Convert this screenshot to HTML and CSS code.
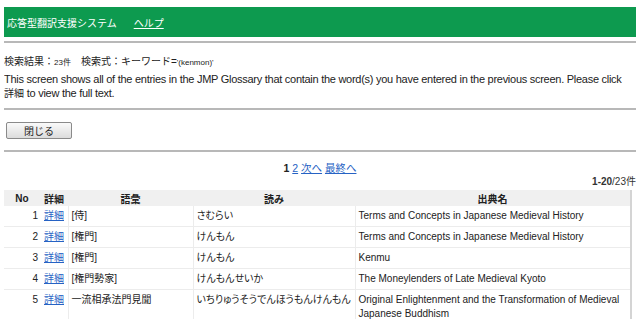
FILE: index.html
```html
<!DOCTYPE html>
<html lang="ja">
<head>
    <meta charset="UTF-8">
    <title>検索結果</title>
    <link rel="stylesheet" href="styles.css">
</head>
<body>
    <!-- Header -->
    <div class="header">
        <span class="title">応答型翻訳支援システム</span>
        <a href="#" class="help">ヘルプ</a>
    </div>
    <hr class="rule">

    <!-- Search info -->
    <p class="search-info">検索結果：<span class="small">23件</span>　検索式：キーワード=<span class="small">'(kenmon)'</span></p>
    <p class="desc">This screen shows all of the entries in the JMP Glossary that contain the word(s) you have entered in the previous screen. Please click <span class="ja">詳細</span> to view the full text.</p>
    <hr class="rule">

    <div class="actions">
        <button class="close-btn">閉じる</button>
    </div>
    <hr class="rule">

    <!-- Pager -->
    <div class="pager">
        <b>1</b> <a href="#">2</a> <a href="#">次へ</a> <a href="#">最終へ</a>
    </div>
    <div class="count"><b>1-20</b>/23件</div>

    <!-- Results -->
    <table class="results">
        <colgroup>
            <col class="c-no">
            <col class="c-detail">
            <col class="c-term">
            <col class="c-read">
            <col>
        </colgroup>
        <thead>
            <tr>
                <th>No</th>
                <th>詳細</th>
                <th>語彙</th>
                <th>読み</th>
                <th>出典名</th>
            </tr>
        </thead>
        <tbody>
            <tr>
                <td class="num">1</td>
                <td><a href="#">詳細</a></td>
                <td>[侍]</td>
                <td class="kana">さむらい</td>
                <td>Terms and Concepts in Japanese Medieval History</td>
            </tr>
            <tr>
                <td class="num">2</td>
                <td><a href="#">詳細</a></td>
                <td>[権門]</td>
                <td class="kana">けんもん</td>
                <td>Terms and Concepts in Japanese Medieval History</td>
            </tr>
            <tr>
                <td class="num">3</td>
                <td><a href="#">詳細</a></td>
                <td>[権門]</td>
                <td class="kana">けんもん</td>
                <td>Kenmu</td>
            </tr>
            <tr>
                <td class="num">4</td>
                <td><a href="#">詳細</a></td>
                <td>[権門勢家]</td>
                <td class="kana">けんもんせいか</td>
                <td>The Moneylenders of Late Medieval Kyoto</td>
            </tr>
            <tr>
                <td class="num">5</td>
                <td><a href="#">詳細</a></td>
                <td>一流相承法門見聞</td>
                <td class="kana">いちりゅうそうでんほうもんけんもん</td>
                <td>Original Enlightenment and the Transformation of Medieval Japanese Buddhism</td>
            </tr>
        </tbody>
    </table>
</body>
</html>
```

FILE: styles.css
```css
/* Global styles */
body {
    margin: 7px 4px 0 4px;
    font-family: 'Liberation Sans', 'Noto Sans CJK JP', sans-serif;
    font-size: 10px;
    color: #222;
    background: #fff;
}

a {
    color: #2662c4;
}

/* Header bar */
.header {
    background-color: #0d9a4f;
    height: 30px;
    display: flex;
    align-items: center;
    padding-left: 3px;
    color: #fff;
}

.header .title {
    margin-right: 17px;
}

.header .help {
    color: #fff;
}

/* Rules */
.rule {
    border: none;
    border-top: 2px solid #b8b8b8;
    margin: 0;
}

.header + .rule {
    margin-top: 4px;
}

/* Search info */
.search-info {
    margin: 12px 0 2px 0;
    line-height: 14px;
}

.small {
    font-size: 8px;
}

.desc {
    margin: 0 0 7px 0;
    font-size: 11px;
    letter-spacing: -0.27px;
    line-height: 14px;
}

.ja {
    font-size: 10px;
    letter-spacing: 0;
    white-space: nowrap;
}

/* Close button */
.actions {
    padding: 12px 0 11px 2px;
}

.close-btn {
    width: 66px;
    height: 17px;
    padding: 0;
    font-family: inherit;
    font-size: 10px;
    color: #222;
    border: 1px solid #8a8a8a;
    border-radius: 2px;
    background: linear-gradient(#fafafa, #dcdcdc);
}

/* Pager */
.pager {
    text-align: center;
    margin-top: 9px;
    line-height: 14px;
    font-size: 10.5px;
}

.count {
    text-align: right;
    line-height: 14px;
    color: #333;
}

/* Results table */
.results {
    width: 628px;
    table-layout: fixed;
    border-collapse: collapse;
    margin-top: 1px;
}

.c-no { width: 36px; }
.c-detail { width: 28px; }
.c-term { width: 125px; }
.c-read { width: 162px; }

.results th {
    background-color: #f0f0f0;
    font-weight: bold;
    height: 16px;
    padding: 0;
    text-align: center;
    white-space: nowrap;
}

.results th:last-child {
    border-right: 2px solid #d4d4d4;
}

.results td {
    padding: 3px 3px 2px 3px;
    height: 15px;
    border-bottom: 1px solid #ececec;
    border-right: 1px solid #ececec;
    vertical-align: top;
    line-height: 14px;
}

.results td:last-child {
    border-right: 2px solid #d4d4d4;
}

.results td:nth-child(1) {
    border-right: none;
}

.results td:nth-child(2) {
    padding-left: 4px;
    white-space: nowrap;
}

.results td.kana {
    font-feature-settings: "palt";
    white-space: nowrap;
}

.results td.num {
    text-align: right;
    padding-right: 2px;
}
```
